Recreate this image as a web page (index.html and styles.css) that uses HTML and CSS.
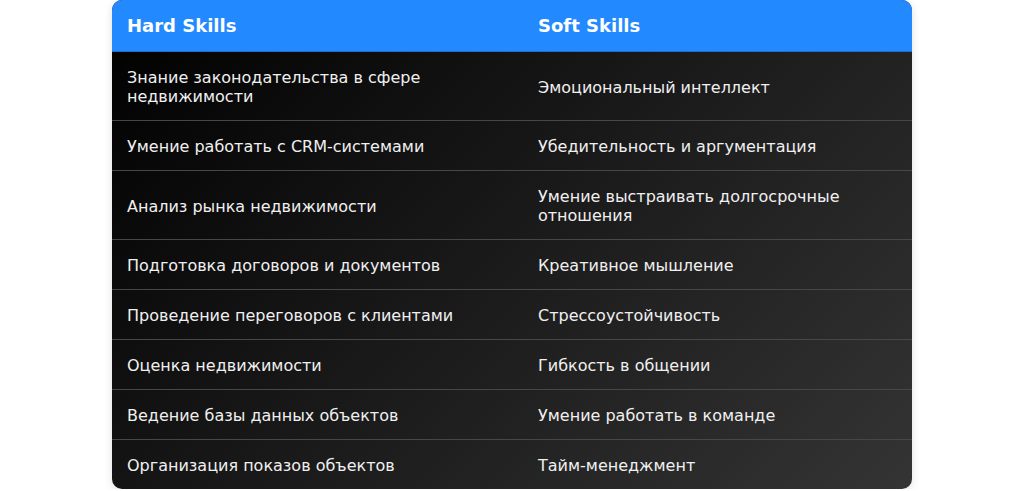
FILE: index.html
```html
<!DOCTYPE html>
<html lang="ru">
<head>
<meta charset="utf-8">
<title>Hard Skills / Soft Skills</title>
<link rel="stylesheet" href="styles.css">
</head>
<body>
<div class="card">
  <table class="skills">
    <thead>
      <tr>
        <th class="col-hard">Hard Skills</th>
        <th>Soft Skills</th>
      </tr>
    </thead>
    <tbody>
      <tr><td>Знание законодательства в сфере<br>недвижимости</td><td>Эмоциональный интеллект</td></tr>
      <tr><td>Умение работать с CRM-системами</td><td>Убедительность и аргументация</td></tr>
      <tr><td>Анализ рынка недвижимости</td><td>Умение выстраивать долгосрочные<br>отношения</td></tr>
      <tr><td>Подготовка договоров и документов</td><td>Креативное мышление</td></tr>
      <tr><td>Проведение переговоров с клиентами</td><td>Стрессоустойчивость</td></tr>
      <tr><td>Оценка недвижимости</td><td>Гибкость в общении</td></tr>
      <tr><td>Ведение базы данных объектов</td><td>Умение работать в команде</td></tr>
      <tr><td>Организация показов объектов</td><td>Тайм-менеджмент</td></tr>
    </tbody>
  </table>
</div>
</body>
</html>
```

FILE: styles.css
```css
html, body {
  margin: 0;
  padding: 0;
  background: #ffffff;
}

body {
  font-family: "DejaVu Sans", sans-serif;
  display: flex;
  justify-content: center;
}

.card {
  width: 800px;
  border-radius: 10px;
  overflow: hidden;
  background: linear-gradient(135deg, #000000 0%, #343434 100%);
  box-shadow: 0 2px 8px rgba(0, 0, 0, 0.12);
}

.skills {
  width: 100%;
  border-collapse: collapse;
  table-layout: fixed;
}

.skills th {
  background: #2389ff;
  color: #ffffff;
  font-size: 18px;
  font-weight: bold;
  text-align: left;
  line-height: 20px;
  padding: 16px 15px 15px;
  border-bottom: 1px solid #1c6fd0;
}

.skills .col-hard {
  width: 381px;
}

.skills td {
  color: #f0f0f0;
  font-size: 16px;
  line-height: 19px;
  padding: 16px 15px 14px;
  vertical-align: middle;
  border-bottom: 1px solid #474747;
}

.skills tbody tr:last-child td {
  border-bottom: none;
}
```
